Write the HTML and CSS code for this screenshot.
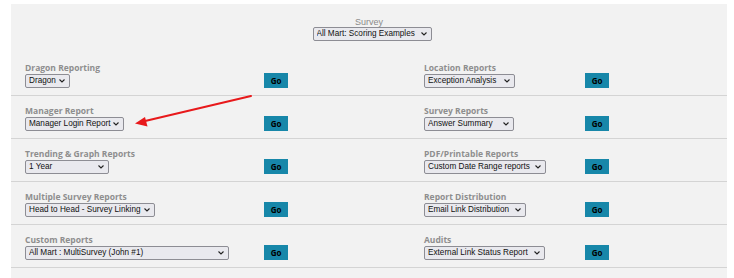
FILE: index.html
```html
<!DOCTYPE html>
<html lang="en">
<head>
<meta charset="utf-8">
<title>Reports</title>
<link rel="stylesheet" href="styles.css">
</head>
<body>
<div class="panel">
  <div class="survey">
    <div class="survey__label">Survey</div>
    <span class="sel sel--survey"><select class="sel__input"><option>All Mart: Scoring Examples</option></select><svg class="sel__chev" viewBox="0 0 6 4"><path d="M0.5 0.5 L3 3 L5.5 0.5"/></svg></span>
  </div>

  <div class="row">
    <div class="field">
      <div class="field__label">Dragon Reporting</div>
      <span class="sel sel--w45"><select class="sel__input"><option>Dragon</option></select><svg class="sel__chev" viewBox="0 0 6 4"><path d="M0.5 0.5 L3 3 L5.5 0.5"/></svg></span>
    </div>
    <button class="go">Go</button>
    <div class="spacer"></div>
    <div class="field">
      <div class="field__label">Location Reports</div>
      <span class="sel sel--w91"><select class="sel__input"><option>Exception Analysis</option></select><svg class="sel__chev" viewBox="0 0 6 4"><path d="M0.5 0.5 L3 3 L5.5 0.5"/></svg></span>
    </div>
    <button class="go">Go</button>
  </div>

  <div class="row">
    <div class="field">
      <div class="field__label">Manager Report</div>
      <span class="sel sel--w99"><select class="sel__input"><option>Manager Login Report</option></select><svg class="sel__chev" viewBox="0 0 6 4"><path d="M0.5 0.5 L3 3 L5.5 0.5"/></svg></span>
    </div>
    <button class="go">Go</button>
    <div class="spacer"></div>
    <div class="field">
      <div class="field__label">Survey Reports</div>
      <span class="sel sel--w90"><select class="sel__input"><option>Answer Summary</option></select><svg class="sel__chev" viewBox="0 0 6 4"><path d="M0.5 0.5 L3 3 L5.5 0.5"/></svg></span>
    </div>
    <button class="go">Go</button>
  </div>

  <div class="row">
    <div class="field">
      <div class="field__label">Trending &amp; Graph Reports</div>
      <span class="sel sel--w84"><select class="sel__input"><option>1 Year</option></select><svg class="sel__chev" viewBox="0 0 6 4"><path d="M0.5 0.5 L3 3 L5.5 0.5"/></svg></span>
    </div>
    <button class="go">Go</button>
    <div class="spacer"></div>
    <div class="field">
      <div class="field__label">PDF/Printable Reports</div>
      <span class="sel sel--w122"><select class="sel__input"><option>Custom Date Range reports</option></select><svg class="sel__chev" viewBox="0 0 6 4"><path d="M0.5 0.5 L3 3 L5.5 0.5"/></svg></span>
    </div>
    <button class="go">Go</button>
  </div>

  <div class="row">
    <div class="field">
      <div class="field__label">Multiple Survey Reports</div>
      <span class="sel sel--w130"><select class="sel__input"><option>Head to Head - Survey Linking</option></select><svg class="sel__chev" viewBox="0 0 6 4"><path d="M0.5 0.5 L3 3 L5.5 0.5"/></svg></span>
    </div>
    <button class="go">Go</button>
    <div class="spacer"></div>
    <div class="field">
      <div class="field__label">Report Distribution</div>
      <span class="sel sel--w102"><select class="sel__input"><option>Email Link Distribution</option></select><svg class="sel__chev" viewBox="0 0 6 4"><path d="M0.5 0.5 L3 3 L5.5 0.5"/></svg></span>
    </div>
    <button class="go">Go</button>
  </div>

  <div class="row">
    <div class="field">
      <div class="field__label">Custom Reports</div>
      <span class="sel sel--w204"><select class="sel__input"><option>All Mart : MultiSurvey (John #1)</option></select><svg class="sel__chev" viewBox="0 0 6 4"><path d="M0.5 0.5 L3 3 L5.5 0.5"/></svg></span>
    </div>
    <button class="go">Go</button>
    <div class="spacer"></div>
    <div class="field">
      <div class="field__label">Audits</div>
      <span class="sel sel--w121"><select class="sel__input"><option>External Link Status Report</option></select><svg class="sel__chev" viewBox="0 0 6 4"><path d="M0.5 0.5 L3 3 L5.5 0.5"/></svg></span>
    </div>
    <button class="go">Go</button>
  </div>
</div>

<svg class="annotation" width="734" height="278" viewBox="0 0 734 278">
  <line x1="251" y1="96" x2="143" y2="121.5" stroke="#e8191b" stroke-width="2" stroke-linecap="round"/>
  <polygon points="135,123.5 145,117 147.5,126.5" fill="#e8191b"/>
</svg>
</body>
</html>
```

FILE: styles.css
```css
html, body {
  margin: 0;
  padding: 0;
  background: #ffffff;
}

body {
  position: relative;
  width: 734px;
  height: 278px;
  overflow: hidden;
  font-family: "Liberation Sans", Arial, sans-serif;
}

.panel {
  margin: 4px 7px 0 11px;
  width: 716px;
  height: 274px;
  overflow: hidden;
  background: #f2f2f2;
  padding-top: 13px;
  box-sizing: border-box;
}

.survey {
  display: flex;
  flex-direction: column;
  align-items: center;
  margin-bottom: 12px;
}

.survey__label {
  font-size: 9px;
  line-height: 10px;
  color: #8a8a8a;
}

.row {
  display: grid;
  grid-template-columns: 239px 24px 136px 161px 24px;
  align-items: end;
  padding: 10px 0 7px 14px;
  border-bottom: 1px solid #d4d4d4;
}

.field {
  display: flex;
  flex-direction: column;
  align-items: flex-start;
}

.field__label {
  font-family: "Open Sans", sans-serif;
  font-weight: 700;
  font-size: 8.5px;
  line-height: 10px;
  color: #8e8e8e;
  margin-bottom: 1px;
  white-space: nowrap;
}

.sel {
  position: relative;
  display: block;
  height: 14px;
}

.sel__input {
  appearance: none;
  -webkit-appearance: none;
  display: block;
  width: 100%;
  height: 14px;
  margin: 0;
  padding: 0 12px 0 3px;
  border: 1px solid #8d8d94;
  border-radius: 2px;
  background: #e9e9ee;
  color: #111;
  font-family: "Liberation Sans", Arial, sans-serif;
  font-size: 8.2px;
  line-height: 12px;
  box-sizing: border-box;
}

.sel__chev {
  position: absolute;
  right: 5px;
  top: 5px;
  width: 6px;
  height: 4px;
  fill: none;
  stroke: #222;
  stroke-width: 1.1;
  pointer-events: none;
}

.sel--survey { width: 119px; margin-left: 6px; }
.sel--w45 { width: 45px; }
.sel--w84 { width: 84px; }
.sel--w90 { width: 90px; }
.sel--w91 { width: 91px; }
.sel--w99 { width: 99px; }
.sel--w102 { width: 102px; }
.sel--w121 { width: 121px; }
.sel--w122 { width: 122px; }
.sel--w130 { width: 130px; }
.sel--w204 { width: 204px; }

.go {
  width: 24px;
  height: 15px;
  margin: 0;
  padding: 0;
  border: none;
  background: #1787a9;
  color: #000;
  font-family: "Open Sans", sans-serif;
  font-weight: 700;
  font-size: 8px;
  line-height: 15px;
  text-align: center;
}

.annotation {
  position: absolute;
  left: 0;
  top: 0;
  pointer-events: none;
}
```
